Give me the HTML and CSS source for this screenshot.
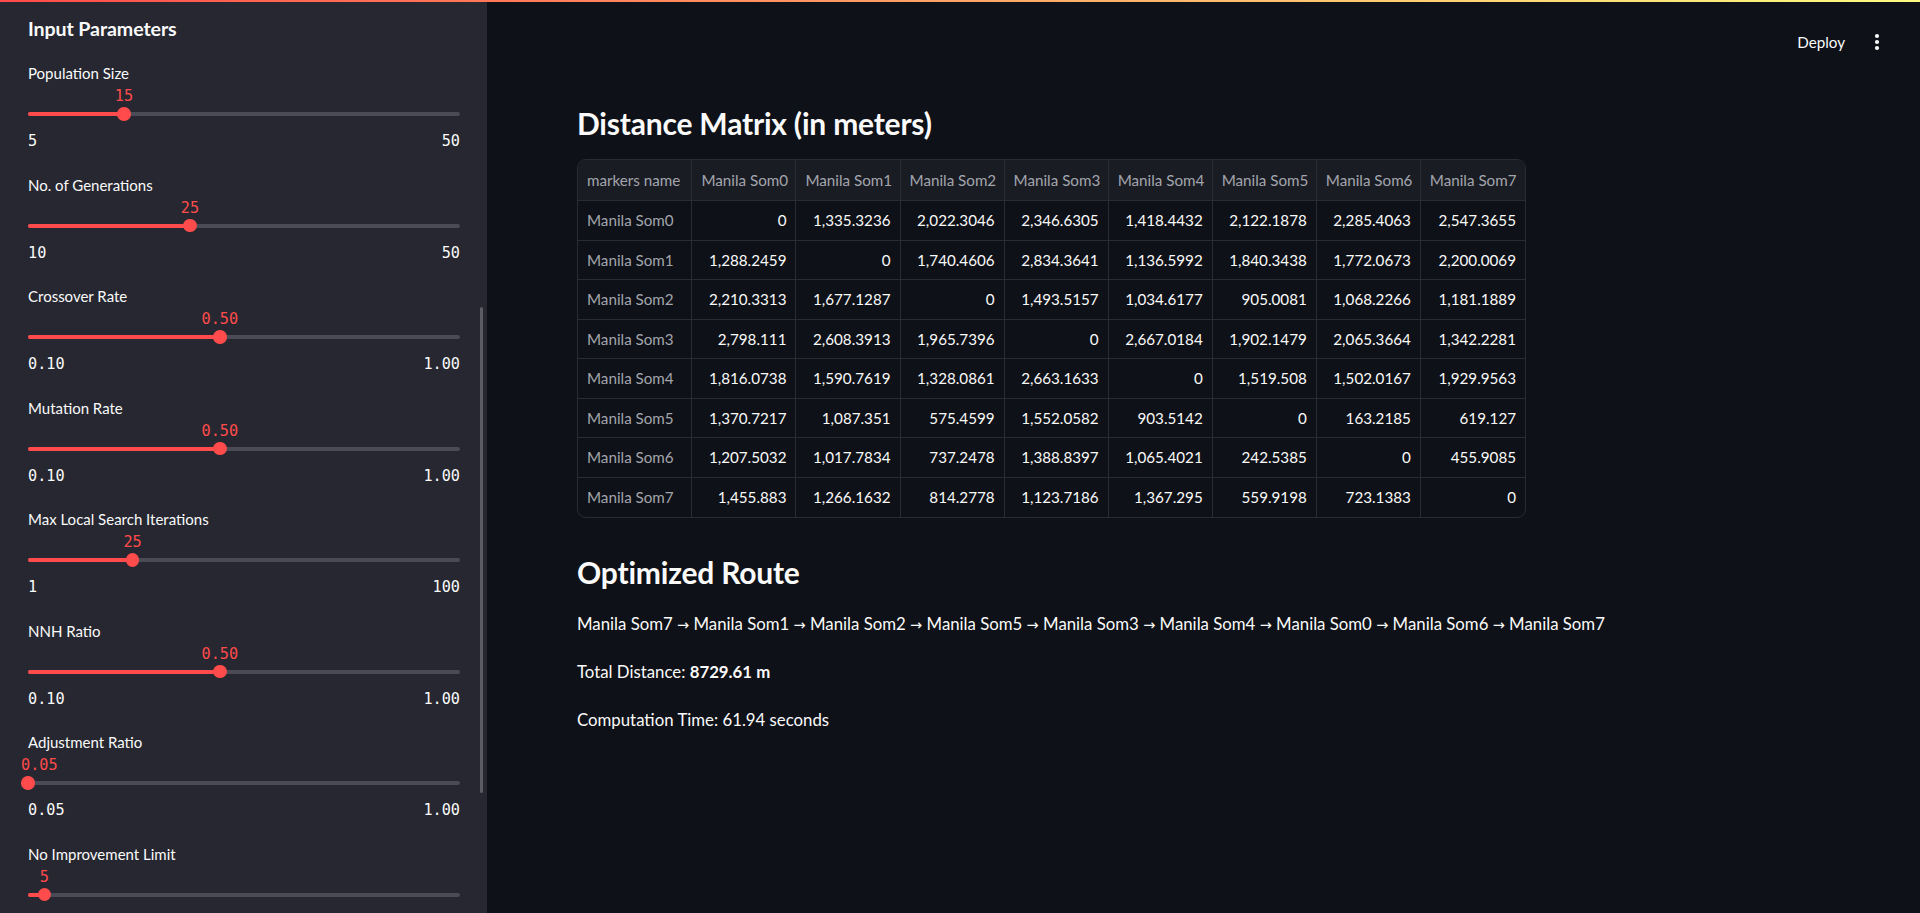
FILE: index.html
```html
<!DOCTYPE html>
<html lang="en">
<head>
<meta charset="utf-8">
<title>Route Optimizer</title>
<link rel="stylesheet" href="styles.css">
</head>
<body>
<div class="decoration"></div>
<div class="app">
  <aside class="sidebar">
    <h2 class="side-title">Input Parameters</h2>

    <div class="slider">
      <div class="slider-label">Population Size</div>
      <div class="slider-body">
        <div class="track"><div class="fill" style="width:22.2%"></div></div>
        <div class="thumb" style="left:22.2%"></div>
        <div class="value" style="left:22.2%">15</div>
      </div>
      <div class="ticks"><span>5</span><span>50</span></div>
    </div>

    <div class="slider">
      <div class="slider-label">No. of Generations</div>
      <div class="slider-body">
        <div class="track"><div class="fill" style="width:37.5%"></div></div>
        <div class="thumb" style="left:37.5%"></div>
        <div class="value" style="left:37.5%">25</div>
      </div>
      <div class="ticks"><span>10</span><span>50</span></div>
    </div>

    <div class="slider">
      <div class="slider-label">Crossover Rate</div>
      <div class="slider-body">
        <div class="track"><div class="fill" style="width:44.4%"></div></div>
        <div class="thumb" style="left:44.4%"></div>
        <div class="value" style="left:44.4%">0.50</div>
      </div>
      <div class="ticks"><span>0.10</span><span>1.00</span></div>
    </div>

    <div class="slider">
      <div class="slider-label">Mutation Rate</div>
      <div class="slider-body">
        <div class="track"><div class="fill" style="width:44.4%"></div></div>
        <div class="thumb" style="left:44.4%"></div>
        <div class="value" style="left:44.4%">0.50</div>
      </div>
      <div class="ticks"><span>0.10</span><span>1.00</span></div>
    </div>

    <div class="slider">
      <div class="slider-label">Max Local Search Iterations</div>
      <div class="slider-body">
        <div class="track"><div class="fill" style="width:24.2%"></div></div>
        <div class="thumb" style="left:24.2%"></div>
        <div class="value" style="left:24.2%">25</div>
      </div>
      <div class="ticks"><span>1</span><span>100</span></div>
    </div>

    <div class="slider">
      <div class="slider-label">NNH Ratio</div>
      <div class="slider-body">
        <div class="track"><div class="fill" style="width:44.4%"></div></div>
        <div class="thumb" style="left:44.4%"></div>
        <div class="value" style="left:44.4%">0.50</div>
      </div>
      <div class="ticks"><span>0.10</span><span>1.00</span></div>
    </div>

    <div class="slider">
      <div class="slider-label">Adjustment Ratio</div>
      <div class="slider-body">
        <div class="track"><div class="fill" style="width:0%"></div></div>
        <div class="thumb" style="left:0%"></div>
        <div class="value edge" style="left:0%">0.05</div>
      </div>
      <div class="ticks"><span>0.05</span><span>1.00</span></div>
    </div>

    <div class="slider">
      <div class="slider-label">No Improvement Limit</div>
      <div class="slider-body">
        <div class="track"><div class="fill" style="width:3.8%"></div></div>
        <div class="thumb" style="left:3.8%"></div>
        <div class="value" style="left:3.8%">5</div>
      </div>
    </div>

    <div class="scrollbar"></div>
  </aside>

  <main class="main">
    <header class="toolbar">
      <span class="deploy">Deploy</span>
      <svg class="menu" width="16" height="20" viewBox="0 0 16 20" aria-hidden="true">
        <circle cx="8" cy="4" r="2.1" fill="#fafafa"/>
        <circle cx="8" cy="10" r="2.1" fill="#fafafa"/>
        <circle cx="8" cy="16" r="2.1" fill="#fafafa"/>
      </svg>
    </header>

    <section class="content">
      <h3 class="heading">Distance Matrix (in meters)</h3>

      <div class="grid-wrap">
        <table class="grid">
          <colgroup>
            <col class="c-first"><col class="c-num"><col class="c-num"><col class="c-num"><col class="c-num"><col class="c-num"><col class="c-num"><col class="c-num"><col class="c-num">
          </colgroup>
          <thead>
            <tr class="head">
              <th>markers name</th><th>Manila Som0</th><th>Manila Som1</th><th>Manila Som2</th><th>Manila Som3</th><th>Manila Som4</th><th>Manila Som5</th><th>Manila Som6</th><th>Manila Som7</th>
            </tr>
          </thead>
          <tbody>
            <tr><td class="idx">Manila Som0</td><td>0</td><td>1,335.3236</td><td>2,022.3046</td><td>2,346.6305</td><td>1,418.4432</td><td>2,122.1878</td><td>2,285.4063</td><td>2,547.3655</td></tr>
            <tr><td class="idx">Manila Som1</td><td>1,288.2459</td><td>0</td><td>1,740.4606</td><td>2,834.3641</td><td>1,136.5992</td><td>1,840.3438</td><td>1,772.0673</td><td>2,200.0069</td></tr>
            <tr><td class="idx">Manila Som2</td><td>2,210.3313</td><td>1,677.1287</td><td>0</td><td>1,493.5157</td><td>1,034.6177</td><td>905.0081</td><td>1,068.2266</td><td>1,181.1889</td></tr>
            <tr><td class="idx">Manila Som3</td><td>2,798.111</td><td>2,608.3913</td><td>1,965.7396</td><td>0</td><td>2,667.0184</td><td>1,902.1479</td><td>2,065.3664</td><td>1,342.2281</td></tr>
            <tr><td class="idx">Manila Som4</td><td>1,816.0738</td><td>1,590.7619</td><td>1,328.0861</td><td>2,663.1633</td><td>0</td><td>1,519.508</td><td>1,502.0167</td><td>1,929.9563</td></tr>
            <tr><td class="idx">Manila Som5</td><td>1,370.7217</td><td>1,087.351</td><td>575.4599</td><td>1,552.0582</td><td>903.5142</td><td>0</td><td>163.2185</td><td>619.127</td></tr>
            <tr><td class="idx">Manila Som6</td><td>1,207.5032</td><td>1,017.7834</td><td>737.2478</td><td>1,388.8397</td><td>1,065.4021</td><td>242.5385</td><td>0</td><td>455.9085</td></tr>
            <tr><td class="idx">Manila Som7</td><td>1,455.883</td><td>1,266.1632</td><td>814.2778</td><td>1,123.7186</td><td>1,367.295</td><td>559.9198</td><td>723.1383</td><td>0</td></tr>
          </tbody>
        </table>
      </div>

      <h3 class="heading heading-2">Optimized Route</h3>
      <p class="text route">Manila Som7 <span class="arrow">→</span> Manila Som1 <span class="arrow">→</span> Manila Som2 <span class="arrow">→</span> Manila Som5 <span class="arrow">→</span> Manila Som3 <span class="arrow">→</span> Manila Som4 <span class="arrow">→</span> Manila Som0 <span class="arrow">→</span> Manila Som6 <span class="arrow">→</span> Manila Som7</p>
      <p class="text">Total Distance: <strong>8729.61 m</strong></p>
      <p class="text">Computation Time: 61.94 seconds</p>
    </section>
  </main>
</div>
</body>
</html>
```

FILE: styles.css
```css
* { box-sizing: border-box; }

html, body {
  margin: 0;
  padding: 0;
  height: 100%;
}

body {
  background: #0e1117;
  color: #fafafa;
  font-family: Lato, "Noto Sans", sans-serif;
  overflow: hidden;
}

.decoration {
  height: 2px;
  background: linear-gradient(90deg, #ff4b4b, #fffd80);
}

.app {
  display: flex;
  height: 911px;
}

/* ---------- Sidebar ---------- */
.sidebar {
  position: relative;
  flex: 0 0 487px;
  background: #262730;
  padding: 13px 27px 0 28px;
  overflow: hidden;
}

.side-title {
  margin: 0 0 21px;
  height: 28px;
  line-height: 28px;
  font-size: 19.6px;
  font-weight: 700;
  letter-spacing: -0.1px;
}

.slider {
  display: flex;
  flex-direction: column;
  margin-bottom: 24.5px;
}

.slider-label {
  height: 20px;
  line-height: 18px;
  padding-bottom: 2px;
  font-size: 15px;
  color: #fafafa;
}

.slider-body {
  position: relative;
  height: 47px;
  padding-top: 28px;
}

.track {
  height: 4px;
  border-radius: 2px;
  background: #4a4b56;
  overflow: hidden;
}

.fill {
  height: 100%;
  background: #ff4b4b;
}

.thumb {
  position: absolute;
  top: 23.4px;
  width: 13.5px;
  height: 13.5px;
  margin-left: -6.75px;
  border-radius: 50%;
  background: #ff4b4b;
}

.value {
  position: absolute;
  top: 2px;
  height: 20px;
  line-height: 20px;
  transform: translateX(-50%);
  font-family: "DejaVu Sans Mono", "Liberation Mono", monospace;
  font-size: 15.2px;
  color: #ff4b4b;
  white-space: nowrap;
}

.value.edge {
  transform: translateX(-7px);
}

.ticks {
  display: flex;
  justify-content: space-between;
  height: 20px;
  line-height: 20px;
  font-family: "DejaVu Sans Mono", "Liberation Mono", monospace;
  font-size: 15.2px;
  color: #fafafa;
}

.scrollbar {
  position: absolute;
  left: 480px;
  top: 305px;
  width: 3px;
  height: 486px;
  border-radius: 2px;
  background: #5b5c64;
}

/* ---------- Main ---------- */
.main {
  flex: 1 1 auto;
  display: flex;
  flex-direction: column;
  min-width: 0;
}

.toolbar {
  height: 80px;
  display: flex;
  align-items: center;
  justify-content: flex-end;
  gap: 24px;
  padding-right: 35px;
}

.deploy {
  font-size: 15.2px;
  color: #fafafa;
}

.menu {
  display: block;
}

.content {
  padding: 21px 90px 0 90px;
}

.heading {
  margin: 0;
  height: 40px;
  line-height: 40px;
  font-size: 30px;
  font-weight: 700;
  letter-spacing: -0.2px;
}

.heading-2 {
  margin-top: 34px;
}

.grid-wrap {
  margin-top: 16px;
  width: 949px;
  border: 1px solid #2a2c34;
  border-radius: 9px;
  overflow: hidden;
}

.grid {
  width: 100%;
  table-layout: fixed;
  border-collapse: separate;
  border-spacing: 0;
  font-size: 15.2px;
}

.c-first { width: 114.4px; }

.grid th,
.grid td {
  padding: 0 9px;
  border-right: 1px solid #2a2c34;
  border-bottom: 1px solid #2a2c34;
  white-space: nowrap;
  overflow: hidden;
}

.grid th:last-child,
.grid td:last-child {
  border-right: none;
}

.grid tbody tr:last-child td {
  border-bottom: none;
}

.grid tr.head {
  height: 41px;
  background: #1a1c24;
}

.grid th {
  font-weight: 400;
  text-align: left;
  color: #a3a5ad;
}

.grid tbody tr {
  height: 39.5px;
}

.grid td {
  text-align: right;
  color: #fafafa;
}

.grid td.idx {
  text-align: left;
  color: #a3a5ad;
}

.text {
  margin: 22px 0 0;
  height: 26px;
  line-height: 26px;
  font-size: 16.8px;
  white-space: nowrap;
}

.route {
  margin-top: 19px;
}

.arrow {
  font-family: "DejaVu Sans", sans-serif;
  font-size: 14.5px;
}

.text strong {
  font-weight: 700;
}
```
